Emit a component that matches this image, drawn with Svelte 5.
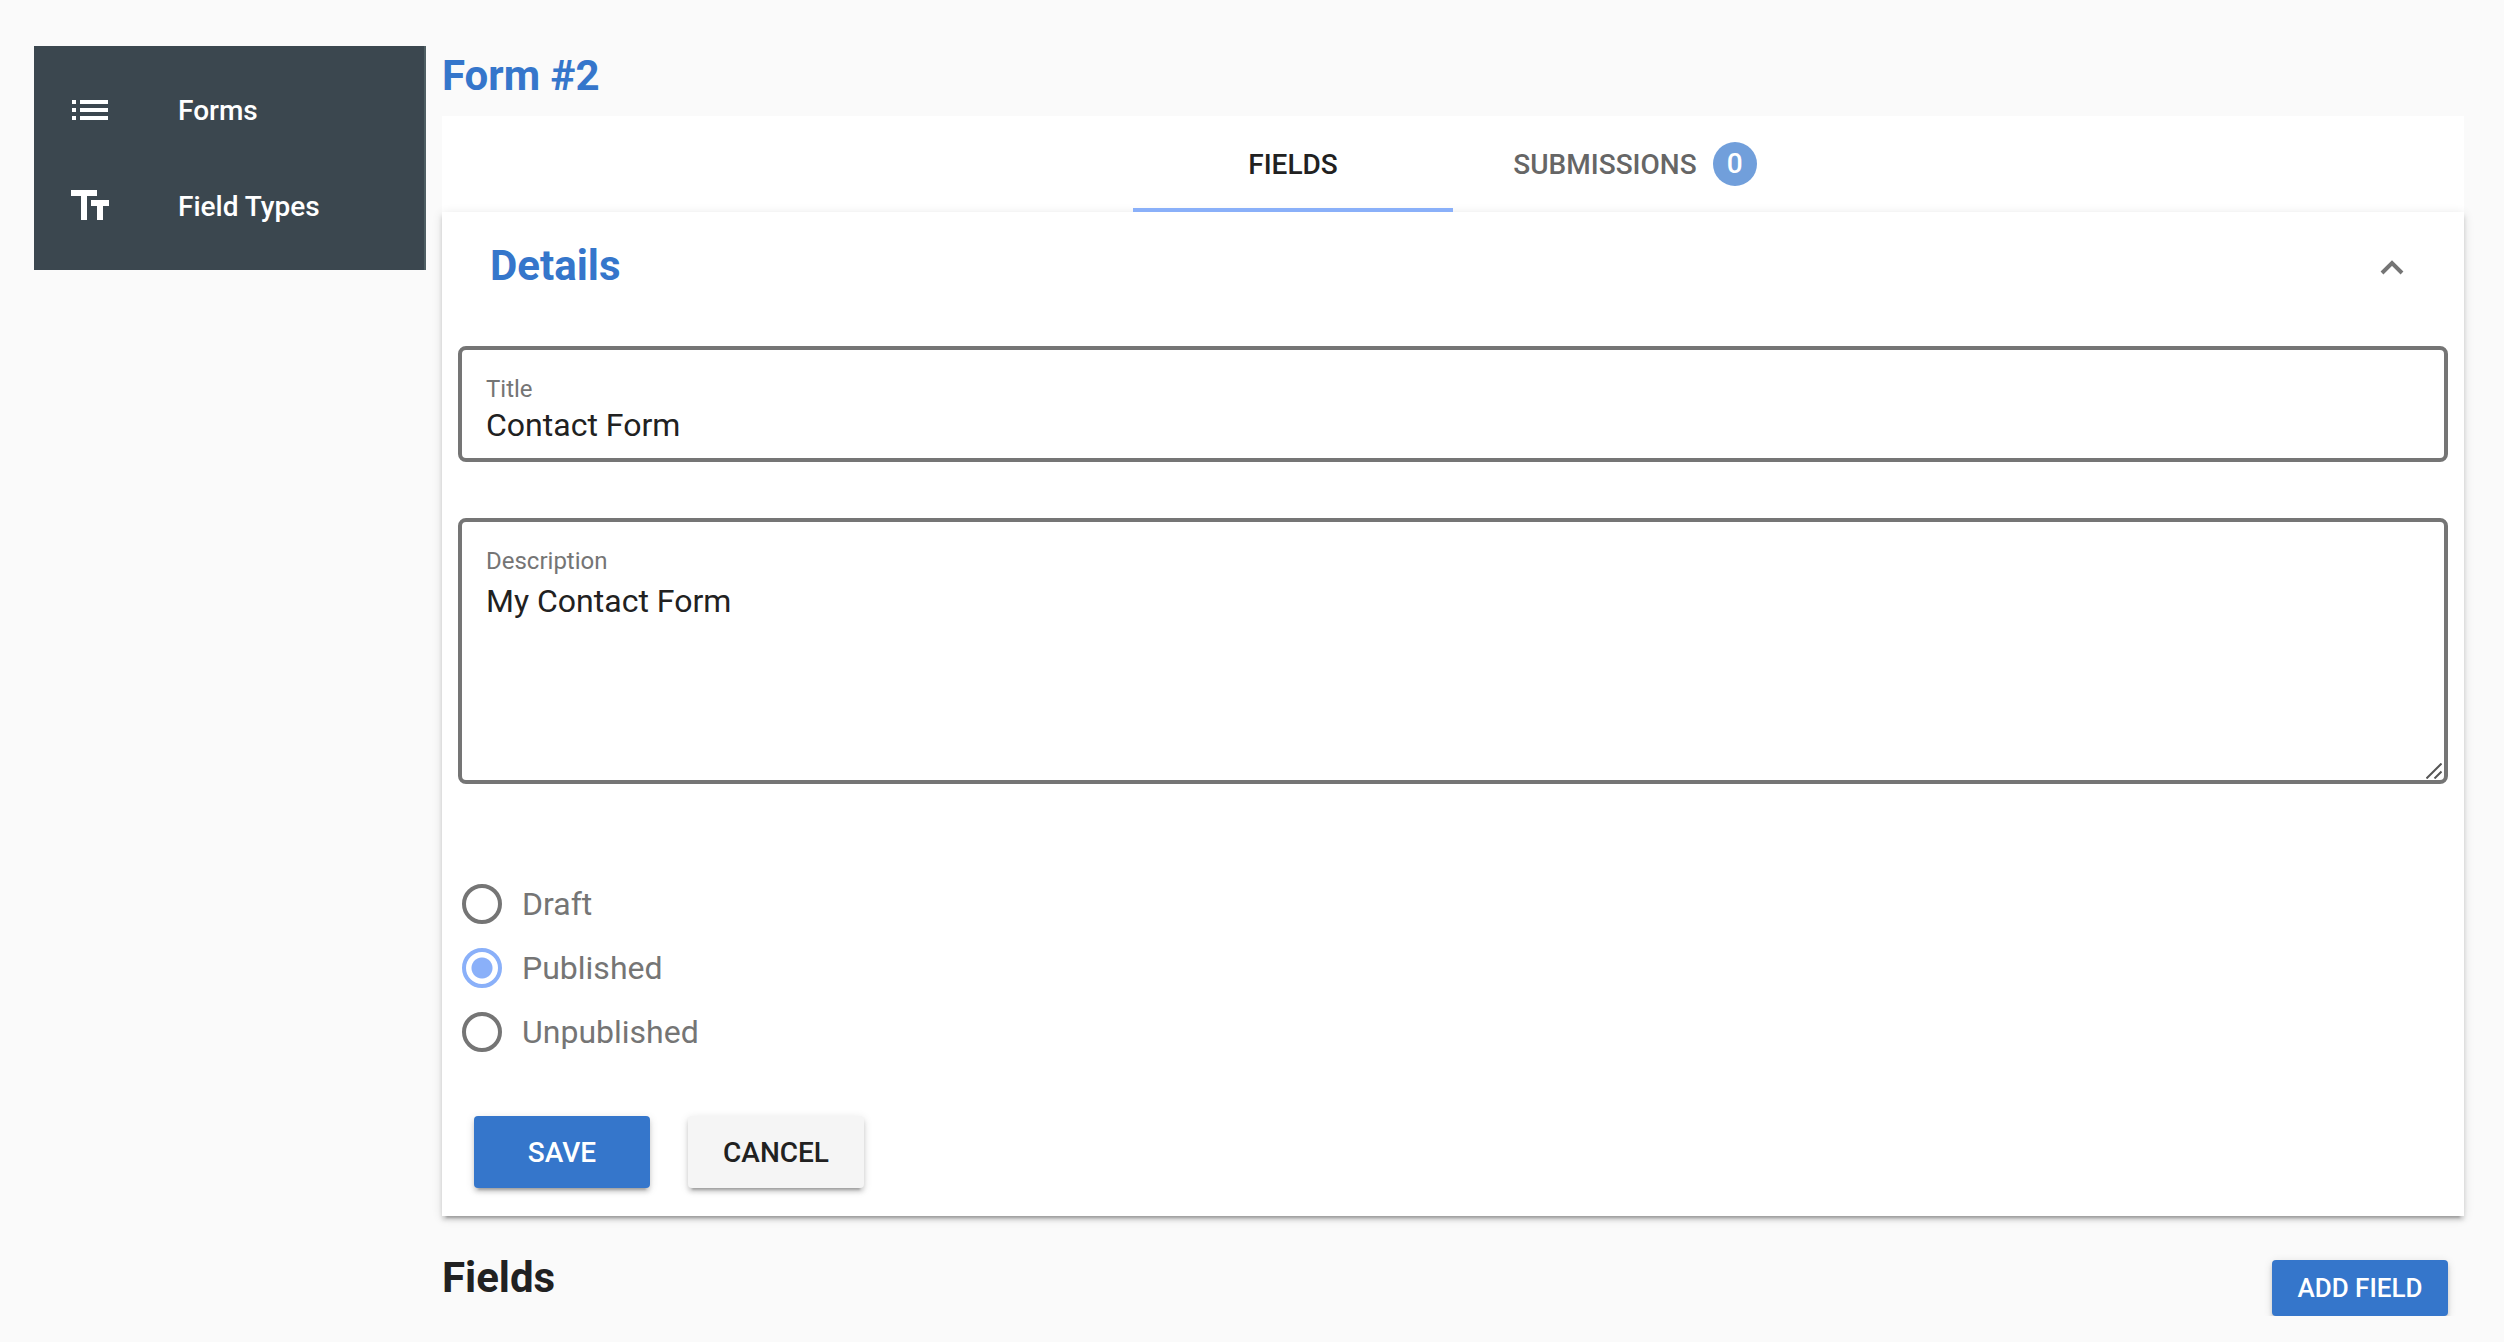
<script lang="ts">
  let title = $state('Contact Form');
  let description = $state('My Contact Form');
  let status = $state('Published');
  let open = $state(true);
  let tab = $state('fields');
  const statuses = ['Draft', 'Published', 'Unpublished'];
</script>

<div class="layout">
  <nav class="side" aria-label="Main">
    <a class="item" href="#forms">
      <svg class="icon" viewBox="0 0 24 24" aria-hidden="true">
        <path d="M3 13h2v-2H3v2zm0 4h2v-2H3v2zm0-8h2V7H3v2zm4 4h14v-2H7v2zm0 4h14v-2H7v2zM7 7v2h14V7H7z" />
      </svg>
      <span>Forms</span>
    </a>
    <a class="item" href="#field-types">
      <svg class="icon" viewBox="0 0 24 24" aria-hidden="true">
        <path d="M2.5 4v3h5v12h3V7h5V4h-13zm19 5h-9v3h3v7h3v-7h3V9z" />
      </svg>
      <span>Field Types</span>
    </a>
  </nav>

  <main class="main">
    <h1 class="heading accent">Form #2</h1>

    <div class="tabs" role="tablist">
      <button class="tab" class:active={tab === 'fields'} role="tab" aria-selected={tab === 'fields'} onclick={() => (tab = 'fields')}>FIELDS</button>
      <button class="tab counted" class:active={tab === 'submissions'} role="tab" aria-selected={tab === 'submissions'} onclick={() => (tab = 'submissions')}>
        <span>SUBMISSIONS</span><span class="badge">0</span>
      </button>
    </div>

    <section class="panel">
      <button class="panel-head" aria-expanded={open} onclick={() => (open = !open)}>
        <span class="heading accent">Details</span>
        <svg class="chevron" class:closed={!open} viewBox="0 0 24 18" aria-hidden="true">
          <path d="M2 16 12 6l10 10" />
        </svg>
      </button>

      {#if open}
        <form class="form" onsubmit={(e) => e.preventDefault()}>
          <div class="field">
            <label for="title">Title</label>
            <input id="title" type="text" bind:value={title} />
          </div>

          <div class="field area">
            <label for="description">Description</label>
            <textarea id="description" rows="3" bind:value={description}></textarea>
            <svg class="grip" viewBox="0 0 16 16" aria-hidden="true">
              <path d="M.5 15.500 15.500.5M8.500 15.500l7-7" />
            </svg>
          </div>

          <div class="radios" role="radiogroup" aria-label="Status">
            {#each statuses as s}
              <label class="radio">
                <input type="radio" name="status" value={s} bind:group={status} />
                <span>{s}</span>
              </label>
            {/each}
          </div>

          <div class="actions">
            <button class="btn primary" type="submit">SAVE</button>
            <button class="btn" type="button">CANCEL</button>
          </div>
        </form>
      {/if}
    </section>

    <div class="fields-bar">
      <h2 class="heading">Fields</h2>
      <button class="btn primary small" type="button">ADD FIELD</button>
    </div>
  </main>
</div>

<style>
  :global(body) {
    background: #fafafa;
    color: #212121;
    font-family: Roboto, 'Liberation Sans', sans-serif;
  }

  .layout {
    display: flex;
    align-items: flex-start;
    gap: 16px;
    padding: 46px 40px 0 34px;
  }

  button,
  input,
  textarea {
    font-family: inherit;
    color: inherit;
    margin: 0;
  }

  button {
    border: 0;
    cursor: pointer;
  }

  .side {
    box-sizing: border-box;
    flex: 0 0 392px;
    padding: 16px 0;
    background: #3b474f;
    border-right: 2px solid #4f5f64;
  }

  .item {
    display: flex;
    align-items: center;
    gap: 64px;
    height: 96px;
    padding: 0 32px;
    color: #fff;
    font-size: 28px;
    font-weight: 500;
    text-decoration: none;
  }

  .icon {
    width: 48px;
    height: 48px;
    fill: currentColor;
  }

  .main {
    flex: 1;
    min-width: 0;
  }

  .heading {
    margin: 0;
    font-size: 42px;
    line-height: 60px;
    font-weight: 700;
  }

  .accent {
    color: #3576cb;
  }

  h1.heading {
    padding-bottom: 10px;
  }

  .tabs {
    display: flex;
    justify-content: center;
    background: #fff;
  }

  .tab {
    box-sizing: border-box;
    display: flex;
    align-items: center;
    justify-content: center;
    gap: 16px;
    width: 320px;
    height: 96px;
    padding: 4px 0 0;
    background: none;
    border-bottom: 4px solid transparent;
    color: #666;
    font-size: 28px;
    font-weight: 500;
  }

  .tab.counted {
    padding-left: 44px;
  }

  .tab.active {
    border-bottom-color: #8ab0f9;
    color: #212121;
  }

  .badge {
    width: 44px;
    border-radius: 50%;
    background: #719fdb;
    color: #fff;
    line-height: 44px;
  }

  .panel {
    background: #fff;
    box-shadow:
      0 6px 2px -4px rgba(0, 0, 0, 0.2),
      0 4px 4px rgba(0, 0, 0, 0.14),
      0 2px 10px rgba(0, 0, 0, 0.12);
  }

  .panel-head {
    display: flex;
    align-items: center;
    justify-content: space-between;
    width: 100%;
    padding: 24px 60px 26px 48px;
    background: none;
    text-align: left;
  }

  .chevron {
    width: 24px;
    height: 18px;
    fill: none;
    stroke: #757575;
    stroke-width: 4;
  }

  .chevron.closed {
    transform: rotate(180deg);
  }

  .form {
    padding: 24px 16px 28px;
  }

  .field {
    position: relative;
    display: flex;
    flex-direction: column;
    padding: 24px 24px 12px;
    border: 4px solid #757575;
    border-radius: 8px;
  }

  .field label {
    color: #757575;
    font-size: 24px;
    line-height: 30px;
  }

  .field input,
  .field textarea {
    padding: 0;
    border: 0;
    outline: 0;
    background: none;
    font-size: 32px;
  }

  .field input {
    height: 42px;
    line-height: 42px;
  }

  .area {
    margin-top: 56px;
  }

  .field textarea {
    padding-top: 6px;
    height: 186px;
    line-height: 38px;
    resize: none;
  }

  .grip {
    position: absolute;
    right: 2px;
    bottom: 1px;
    width: 16px;
    height: 16px;
    fill: none;
    stroke: #555;
    stroke-width: 2;
  }

  .radios {
    display: flex;
    flex-direction: column;
    padding: 88px 4px 0;
  }

  .radio {
    display: flex;
    align-items: center;
    gap: 20px;
    height: 64px;
    color: #757575;
    font-size: 32px;
  }

  .radio input {
    appearance: none;
    width: 40px;
    height: 40px;
    border: 4px solid #757575;
    border-radius: 50%;
  }

  .radio input:checked {
    border-color: #8ab0f9;
    background: radial-gradient(circle, #8ab0f9 10px, transparent 11px);
  }

  .actions {
    display: flex;
    gap: 38px;
    padding: 52px 16px 0;
  }

  .btn {
    width: 176px;
    height: 72px;
    padding: 0;
    border-radius: 4px;
    background: #f5f5f5;
    box-shadow:
      0 6px 2px -4px rgba(0, 0, 0, 0.2),
      0 4px 4px rgba(0, 0, 0, 0.14),
      0 2px 10px rgba(0, 0, 0, 0.12);
    font-size: 28px;
    font-weight: 500;
  }

  .btn.primary {
    background: #3576cb;
    color: #fff;
  }

  .btn.small {
    height: 56px;
    font-size: 26px;
  }

  .fields-bar {
    display: flex;
    align-items: flex-end;
    justify-content: space-between;
    padding: 32px 16px 0 0;
  }

  .fields-bar .heading {
    align-self: flex-start;
    padding-bottom: 8px;
  }
</style>
